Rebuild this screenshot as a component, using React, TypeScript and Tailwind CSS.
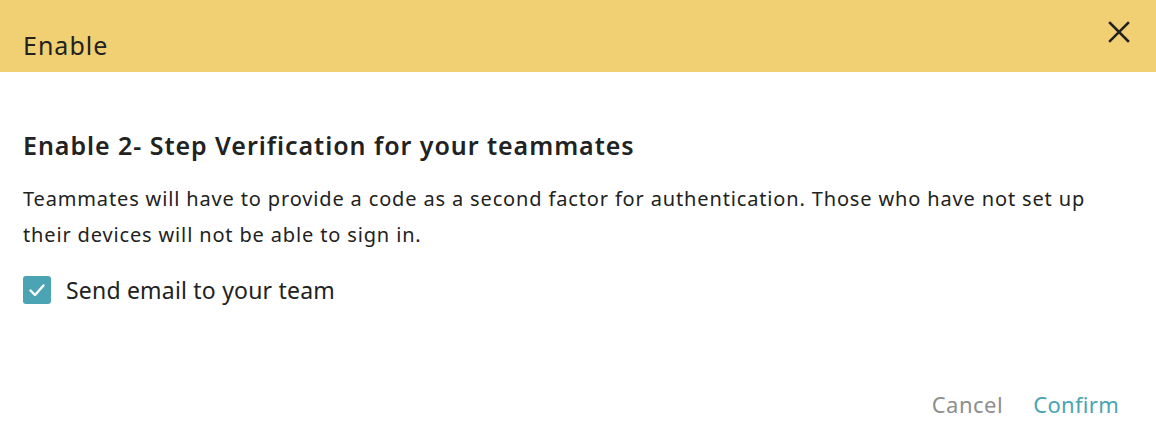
import React, { useState } from 'react';

export default function App() {
  const [sendEmail, setSendEmail] = useState(true);

  return (
    <div
      className="w-[1156px] h-[445px] bg-white flex flex-col text-[#222222]"
      style={{ fontFamily: '"Noto Sans", "Liberation Sans", sans-serif' }}
    >
      <div className="h-[72px] bg-[#f1d073] flex items-start justify-between pl-[23px] pr-[26px] pt-[27px]">
        <span className="text-[25px] leading-[36px] tracking-[1px] -mt-[9px] pt-[9px]">Enable</span>
        <button className="w-[22px] h-[22px] flex items-center justify-center -mt-[6px]" aria-label="Close">
          <svg width="22" height="22" viewBox="0 0 22 22" fill="none" stroke="#222" strokeWidth="2.5" strokeLinecap="square">
            <path d="M2 2 L20 20 M20 2 L2 20" />
          </svg>
        </button>
      </div>

      <div className="flex-1 flex flex-col pl-[23px] pr-[40px] pt-[55px]">
        <h2 className="text-[25px] font-semibold leading-[36px] tracking-[0.95px]">
          Enable 2- Step Verification for your teammates
        </h2>
        <p className="mt-[18px] text-[20px] leading-[36px] tracking-[0.85px]">
          Teammates will have to provide a code as a second factor for authentication. Those who have not set up their devices will not be able to sign in.
        </p>
        <label className="mt-[23px] flex items-center gap-[15px] cursor-pointer">
          <button
            onClick={() => setSendEmail(!sendEmail)}
            className={`w-[28px] h-[28px] rounded-[3px] flex items-center justify-center ${sendEmail ? 'bg-[#4ba4b4]' : 'border-2 border-gray-300 bg-white'}`}
          >
            {sendEmail && (
              <svg width="28" height="28" viewBox="0 0 28 28" fill="none" stroke="white" strokeWidth="2.4" strokeLinecap="round" strokeLinejoin="round">
                <path d="M7.5 14.5 L12 19 L20.5 9.5" />
              </svg>
            )}
          </button>
          <span className="text-[23px] leading-[28px] tracking-[0.2px]">Send email to your team</span>
        </label>
      </div>

      <div className="flex justify-end items-center gap-[30px] pr-[37px] pb-[26px]">
        <button className="text-[22px] leading-[30px] tracking-[0.5px] text-[#8e8e8e]">Cancel</button>
        <button className="text-[22px] leading-[30px] tracking-[0.3px] text-[#4ba4b4]">Confirm</button>
      </div>
    </div>
  );
}
